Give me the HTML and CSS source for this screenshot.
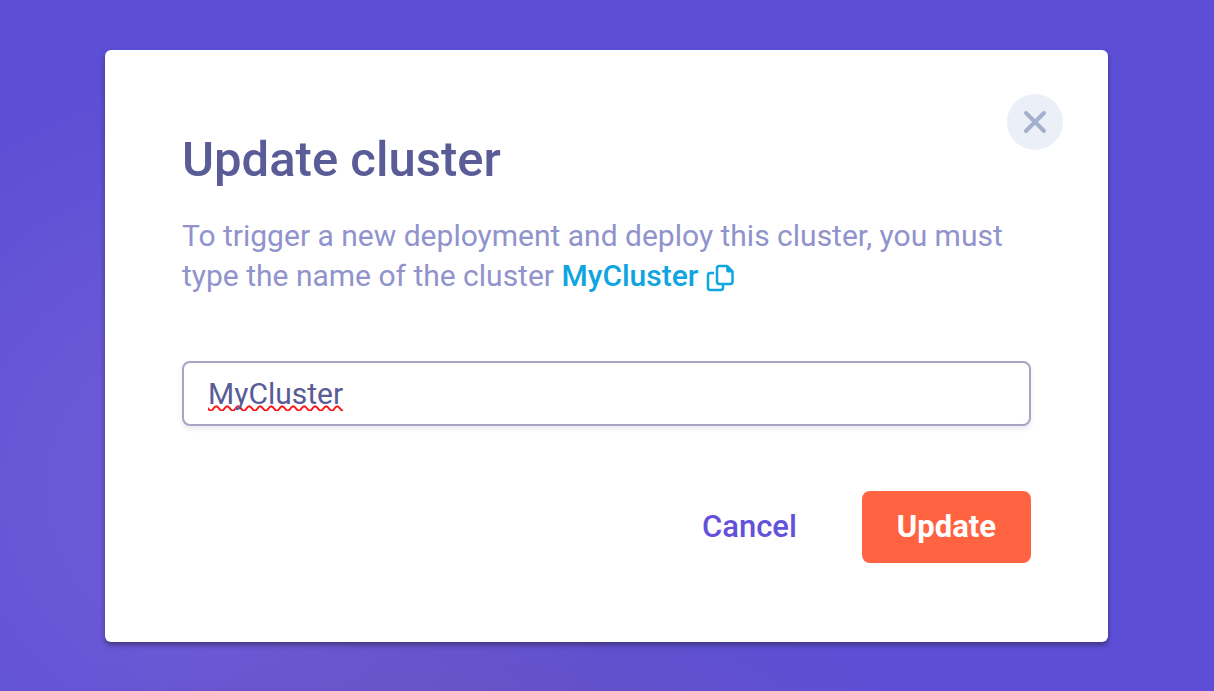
FILE: index.html
```html
<!DOCTYPE html>
<html lang="en">
<head>
<meta charset="utf-8">
<meta name="viewport" content="width=device-width, initial-scale=1">
<title>Update cluster</title>
<link rel="stylesheet" href="styles.css">
</head>
<body class="page">
<main class="modal" role="dialog" aria-labelledby="modal-title">
  <button class="close" type="button" aria-label="Close">
    <svg width="24" height="24" viewBox="0 0 24 24" fill="none" stroke="currentColor" stroke-width="4" stroke-linecap="round"><path d="M3 3l18 18M21 3l-18 18"/></svg>
  </button>
  <h1 class="title" id="modal-title">Update cluster</h1>
  <form class="form">
    <label class="description" for="cluster-name">To trigger a new deployment and deploy this cluster, you must type the name of the cluster <span class="cluster">MyCluster <svg class="copy" width="28" height="28" viewBox="0 0 28 28" fill="none" stroke="currentColor" stroke-width="2.5" stroke-linejoin="round" aria-hidden="true"><path d="M8 9H4.2Q2 9 2 11.2V23.8Q2 26 4.2 26H14.8Q17 26 17 23.8V21"/><path d="M13.2 2H21L26.5 7.5V17.8Q26.5 20 24.3 20H13.2Q11 20 11 17.8V4.2Q11 2 13.2 2Z"/><path d="M20.2 2H21L26.5 7.5V8.6H22.2Q20.2 8.6 20.2 6.6Z" fill="currentColor" stroke="none"/></svg></span></label>
    <input class="field" id="cluster-name" type="text" value="MyCluster">
    <div class="actions">
      <button class="button cancel" type="button">Cancel</button>
      <button class="button update" type="submit">Update</button>
    </div>
  </form>
</main>
</body>
</html>
```
FILE: styles.css
```css
* {
  box-sizing: border-box;
}

.page {
  margin: 0;
  min-height: 100vh;
  padding: 50px 106px 49px 105px;
  font-family: Roboto, sans-serif;
  font-size: 30px;
  line-height: 40px;
  background:
    radial-gradient(ellipse 420px 150px at 480px 730px, rgba(112, 84, 184, 0.6), rgba(112, 84, 184, 0) 100%),
    radial-gradient(ellipse 420px 420px at 210px 490px, #735bd6 0%, #6c59d6 30%, #5c4fd5 100%);
}

.modal {
  position: relative;
  padding: 78px 77px 79px;
  background: #fff;
  border-radius: 6px;
  box-shadow: 0 3px 5px rgba(50, 40, 90, 0.65);
}

.close {
  position: absolute;
  top: 44px;
  right: 45px;
  display: grid;
  place-items: center;
  width: 56px;
  height: 56px;
  padding: 0;
  border: 0;
  border-radius: 50%;
  color: #a4b0cc;
  background: #ebeff8;
}

.title {
  margin: 0 0 24px;
  font-size: 49px;
  line-height: 64px;
  font-weight: 500;
  color: #595c96;
}

.form {
  display: flex;
  flex-direction: column;
}

.description {
  color: #9093cc;
}

.cluster {
  color: #0ea5e0;
  font-weight: 500;
  white-space: nowrap;
}

.copy {
  vertical-align: -6px;
}

.field {
  width: 100%;
  height: 65px;
  margin: 65px 0;
  padding: 0 24px;
  border: 2px solid #a6a5c6;
  border-radius: 8px;
  outline: 0;
  font: inherit;
  color: #595c96;
  background: #fff;
  box-shadow: 0 3px 5px rgba(60, 50, 90, 0.1);
  text-decoration: underline wavy #f11 2px;
  text-decoration-skip-ink: none;
}

.actions {
  display: flex;
  justify-content: flex-end;
  gap: 30px;
}

.button {
  height: 72px;
  padding: 0 35px;
  border: 0;
  border-radius: 8px;
  font: inherit;
  font-size: 31px;
}

.cancel {
  font-weight: 500;
  color: #6352d9;
  background: none;
}

.update {
  font-weight: 700;
  color: #fff;
  background: #ff6341;
}
```
